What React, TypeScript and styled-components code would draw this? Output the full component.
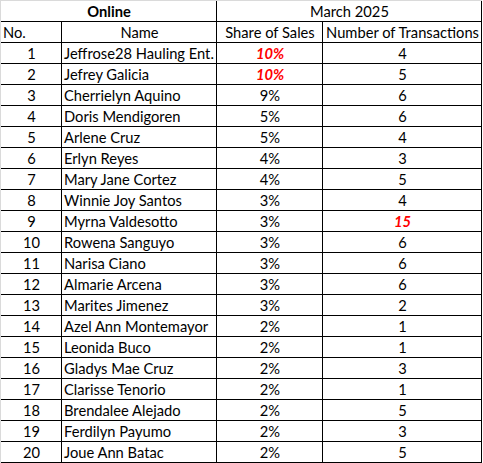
import React from "react";
import styled, { createGlobalStyle } from "styled-components";

const GlobalStyle = createGlobalStyle`
  body {
    margin: 0;
    background: #ffffff;
    font-family: Lato, "Liberation Sans", sans-serif;
  }
`;

const Sheet = styled.div`
  display: grid;
  grid-template-columns: 61px 155px 106px 159px;
  grid-auto-rows: 21px;
  width: max-content;
  border-top: 1px solid #dadada;
  border-left: 1px solid #dadada;
  font-size: 14.7px;
  color: #000000;
`;

const Cell = styled.div<{ $align?: "left" | "center"; $span?: number; $bold?: boolean }>`
  box-sizing: border-box;
  grid-column: span ${(p) => p.$span || 1};
  border-bottom: 1px solid #000000;
  border-right: 1px solid #000000;
  line-height: 20px;
  padding: 0 1px 0 2px;
  white-space: nowrap;
  overflow: hidden;
  text-align: ${(p) => p.$align || "center"};
  font-weight: ${(p) => (p.$bold ? 700 : 400)};
`;

const Highlight = styled.span`
  color: #ff0000;
  font-weight: 700;
  font-style: italic;
`;

type Row = { name: string; share: string; count: string; hotShare?: boolean; hotCount?: boolean };

const rows: Row[] = [
  { name: "Jeffrose28 Hauling Ent.", share: "10%", count: "4", hotShare: true },
  { name: "Jefrey Galicia", share: "10%", count: "5", hotShare: true },
  { name: "Cherrielyn Aquino", share: "9%", count: "6" },
  { name: "Doris Mendigoren", share: "5%", count: "6" },
  { name: "Arlene Cruz", share: "5%", count: "4" },
  { name: "Erlyn Reyes", share: "4%", count: "3" },
  { name: "Mary Jane Cortez", share: "4%", count: "5" },
  { name: "Winnie Joy Santos", share: "3%", count: "4" },
  { name: "Myrna Valdesotto", share: "3%", count: "15", hotCount: true },
  { name: "Rowena Sanguyo", share: "3%", count: "6" },
  { name: "Narisa Ciano", share: "3%", count: "6" },
  { name: "Almarie Arcena", share: "3%", count: "6" },
  { name: "Marites Jimenez", share: "3%", count: "2" },
  { name: "Azel Ann Montemayor", share: "2%", count: "1" },
  { name: "Leonida Buco", share: "2%", count: "1" },
  { name: "Gladys Mae Cruz", share: "2%", count: "3" },
  { name: "Clarisse Tenorio", share: "2%", count: "1" },
  { name: "Brendalee Alejado", share: "2%", count: "5" },
  { name: "Ferdilyn Payumo", share: "2%", count: "3" },
  { name: "Joue Ann Batac", share: "2%", count: "5" },
];

const App = () => {
  return (
    <>
      <GlobalStyle />
      <Sheet>
        <Cell $span={2} $bold>
          Online
        </Cell>
        <Cell $span={2}>March 2025</Cell>

        <Cell $align="left">No.</Cell>
        <Cell>Name</Cell>
        <Cell>Share of Sales</Cell>
        <Cell>Number of Transactions</Cell>

        {rows.map((r, i) => (
          <React.Fragment key={r.name}>
            <Cell>{i + 1}</Cell>
            <Cell $align="left">{r.name}</Cell>
            <Cell>{r.hotShare ? <Highlight>{r.share}</Highlight> : r.share}</Cell>
            <Cell>{r.hotCount ? <Highlight>{r.count}</Highlight> : r.count}</Cell>
          </React.Fragment>
        ))}
      </Sheet>
    </>
  );
};

export default App;
